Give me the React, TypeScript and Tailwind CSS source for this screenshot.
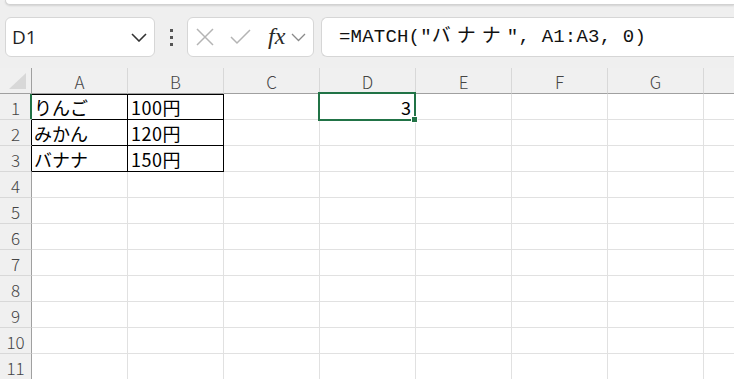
import React from 'react';

const COLUMNS = ['A', 'B', 'C', 'D', 'E', 'F', 'G', 'H'];
const ROWS = [1, 2, 3, 4, 5, 6, 7, 8, 9, 10, 11];

const data: Record<string, string> = {
  A1: 'りんご',
  B1: '100円',
  A2: 'みかん',
  B2: '120円',
  A3: 'バナナ',
  B3: '150円',
  D1: '3',
};

const jp = "font-['Noto_Sans_CJK_JP','Noto_Sans',sans-serif]";

function NameBox() {
  return (
    <div className="w-[150px] h-10 bg-white rounded-md border border-[#d6d6d6] flex items-center justify-between pl-[6px] pr-[7px]">
      <span className="text-[19px] text-[#1f1f1f] font-['Open_Sans','Noto_Sans',sans-serif]">D1</span>
      <svg width="16" height="10" viewBox="0 0 16 10">
        <polyline points="1,2 8,9 15,2" fill="none" stroke="#333" strokeWidth="1.6" />
      </svg>
    </div>
  );
}

function FormulaButtons() {
  return (
    <div className="w-[127px] h-10 bg-white rounded-md border border-[#d6d6d6] flex items-center pl-[7px]">
      <svg width="20" height="20" viewBox="0 0 20 20">
        <path d="M2 2 L18 18 M18 2 L2 18" stroke="#b4b4b4" strokeWidth="1.5" fill="none" />
      </svg>
      <svg width="21" height="16" viewBox="0 0 21 16" className="ml-[15px]">
        <polyline points="1,8 7,14 20,1" stroke="#b4b4b4" strokeWidth="1.5" fill="none" />
      </svg>
      <span className="ml-[17px] text-[24px] italic text-[#2a2a2a] leading-none font-['Liberation_Serif',serif] -mt-[3px]">fx</span>
      <svg width="15" height="9" viewBox="0 0 15 9" className="ml-[6px]">
        <polyline points="1,1 7.5,7.5 14,1" fill="none" stroke="#8a8a8a" strokeWidth="1.3" />
      </svg>
    </div>
  );
}

function Toolbar() {
  return (
    <div className="mt-3 h-10 flex items-center pl-[5px]">
      <NameBox />
      <div className="w-[32px] flex flex-col items-center gap-[4px]">
        <span className="w-[3px] h-[3px] bg-[#555]" />
        <span className="w-[3px] h-[3px] bg-[#555]" />
        <span className="w-[3px] h-[3px] bg-[#555]" />
      </div>
      <FormulaButtons />
      <div className="ml-[7px] flex-1 h-10 bg-white rounded-l-md border border-r-0 border-[#d6d6d6] flex items-center pl-[17px]">
        <span className="text-[19px] tracking-[0.2px] text-[#111] font-['Liberation_Mono','Noto_Sans_CJK_JP',monospace] whitespace-pre">
          =MATCH("<span className="tracking-[6px]">バナナ</span>", A1:A3, 0)
        </span>
      </div>
    </div>
  );
}

function HeaderRow() {
  return (
    <div className="flex h-[26px] bg-[#f0f0f0]">
      <div className="relative w-[32px] shrink-0 border-r border-b border-[#a0a0a0]">
        <svg width="18" height="17" viewBox="0 0 18 17" className="absolute left-[9px] top-[5px]">
          <polygon points="17,0 17,16 0,16" fill="#d8d8d8" />
        </svg>
      </div>
      {COLUMNS.map((c) => (
        <div
          key={c}
          className={`w-[96px] shrink-0 border-r border-[#d8d8d8] border-b flex items-center justify-center pt-[3px] text-[17px] font-light text-[#444] ${jp} ${
            c === 'D' ? 'border-b-[#217346] shadow-[inset_0_-1px_0_#217346]' : 'border-b-[#a0a0a0]'
          }`}
        >
          {c === 'H' ? '' : c}
        </div>
      ))}
    </div>
  );
}

function Cell({ col, row }: { col: string; row: number }) {
  const key = `${col}${row}`;
  const value = data[key];
  const inTable = (col === 'A' || col === 'B') && row <= 3;
  const isSelected = key === 'D1';
  const isNumber = value !== undefined && /^\d+$/.test(value);

  let borders = 'border-r border-b border-[#e1e1e1]';
  if (inTable) {
    borders = 'border-r border-b border-black';
  }
  let inset = '';
  if (inTable && row === 1) inset = 'shadow-[inset_0_1px_0_#000]';

  return (
    <div
      className={`relative w-[96px] shrink-0 h-full flex items-center ${borders} ${inset} ${
        isNumber ? 'justify-end pr-[4px]' : col === 'B' ? 'pl-[3px] tracking-[0.5px]' : 'pl-[2px]'
      } text-[18px] text-black leading-none ${jp}`}
    >
      {value}
      {isSelected && (
        <div className="absolute -left-[2px] -top-[2px] -right-[1px] -bottom-[2px] border-2 border-[#217346] z-10">
          <div className="absolute -right-[4px] -bottom-[4px] w-[7px] h-[7px] bg-[#217346] border border-white" />
        </div>
      )}
    </div>
  );
}

function Row({ row }: { row: number }) {
  const headerBorder =
    row === 1
      ? 'border-r-[#217346] shadow-[inset_-1px_0_0_#217346]'
      : row <= 3
      ? 'border-r-black'
      : 'border-r-[#a0a0a0]';
  return (
    <div className="flex h-[26px]">
      <div
        className={`w-[32px] shrink-0 bg-[#f0f0f0] border-r border-b border-b-[#d8d8d8] ${headerBorder} flex items-center justify-center pt-[2px] text-[17px] font-light text-[#444] ${jp}`}
      >
        {row}
      </div>
      {COLUMNS.map((c) => (
        <Cell key={c} col={c} row={row} />
      ))}
    </div>
  );
}

export default function App() {
  return (
    <div className="w-[734px] h-[379px] overflow-hidden bg-[#efefef] flex flex-col">
      <div className="h-[5px] ml-[5px] bg-white rounded-bl-lg border-l border-b border-[#d2d2d2] shadow-[0_1px_2px_rgba(0,0,0,0.12)]" />
      <Toolbar />
      <div className="mt-[11px] bg-white flex-1 overflow-hidden">
        <HeaderRow />
        {ROWS.map((r) => (
          <Row key={r} row={r} />
        ))}
      </div>
    </div>
  );
}
